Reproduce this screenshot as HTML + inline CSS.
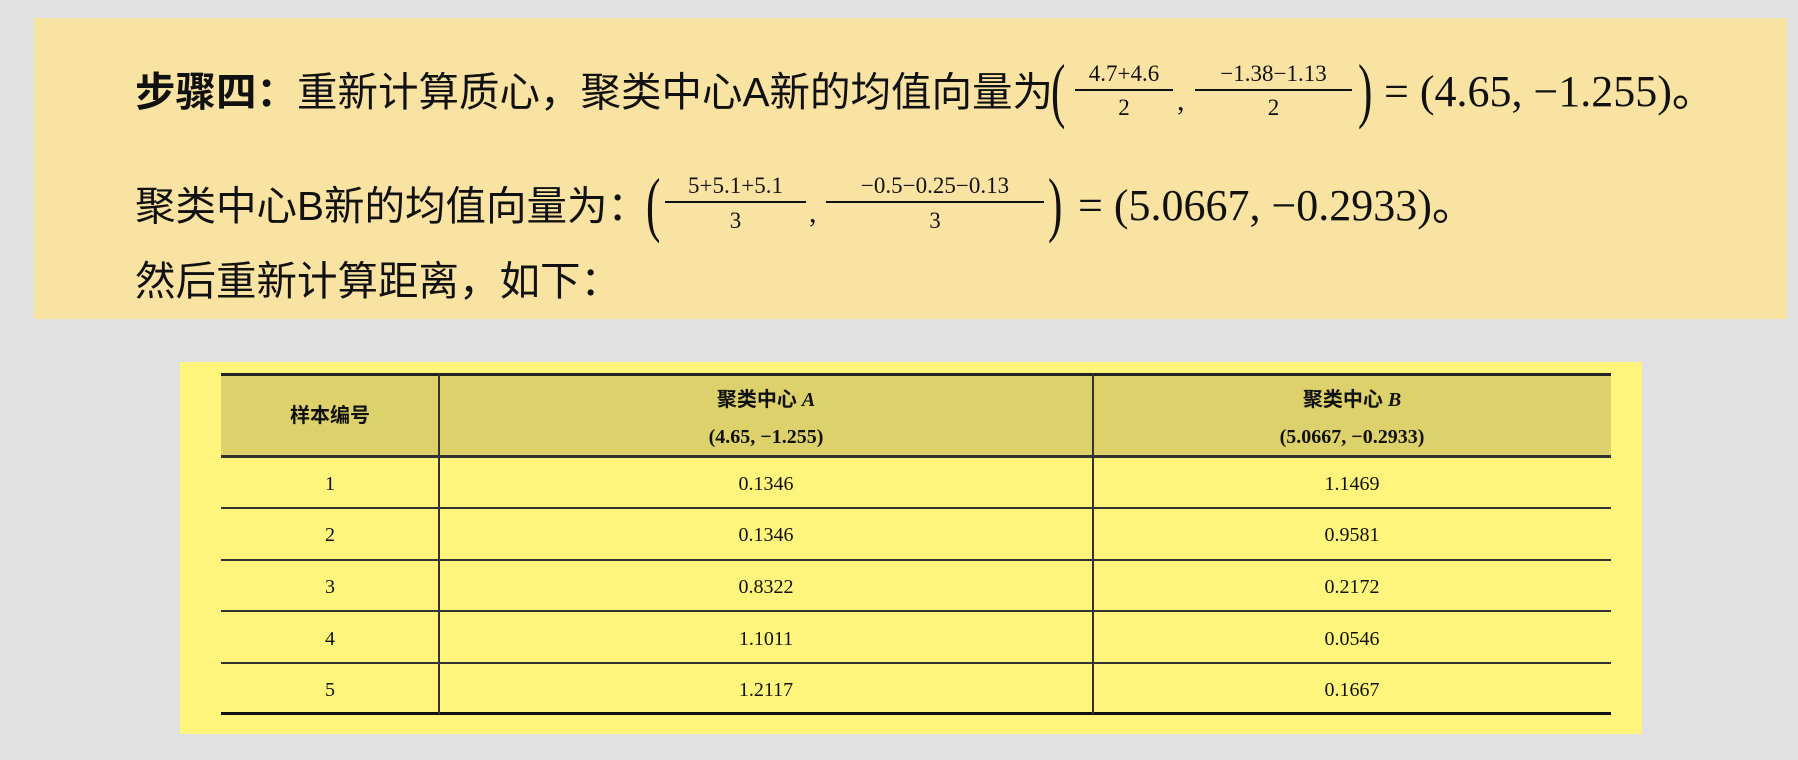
<!DOCTYPE html>
<html><head><meta charset="utf-8"><style>
body{margin:0;width:1798px;height:760px;background:#e1e1e1;position:relative;overflow:hidden;font-family:"Liberation Sans","Noto Sans CJK SC",sans-serif;color:#111}
.a{position:absolute;white-space:nowrap;line-height:1}
.t{font-size:40.5px;transform:translateY(-50%)}
.m{font-family:"Liberation Serif","DejaVu Serif",serif}
.fr{position:absolute;font-family:"Liberation Serif",serif;font-size:23px;text-align:center}
.fr .n{position:absolute;left:0;right:0}
.fr .b{position:absolute;left:0;right:0;height:2px;background:#111}
.p{position:absolute;font-family:"Liberation Serif",serif;font-size:72px;line-height:1;transform:scaleX(.6);transform-origin:left}
.hl{position:absolute;background:#222}
.c{position:absolute;transform:translate(-50%,-50%);font-family:"Liberation Serif","Noto Serif CJK SC",serif;font-size:20px;white-space:nowrap;line-height:1}
.h{font-weight:bold;font-family:"Liberation Serif","Noto Sans CJK SC",serif}
</style></head><body>
<div class="a" style="left:34px;top:18px;width:1753px;height:301px;background:#f9e3a3"></div>

<div class="a t" style="left:135px;top:92px"><b>步骤四：</b>重新计算质心，聚类中心A新的均值向量为</div>
<div class="p" style="left:1051px;top:54px">(</div>
<div class="fr" style="left:1075px;top:60px;width:98px"><div class="n" style="top:1px">4.7+4.6</div><div class="b" style="top:29px"></div><div class="n" style="top:35px">2</div></div>
<div class="a m" style="left:1177px;top:86px;font-size:30px">,</div>
<div class="fr" style="left:1195px;top:60px;width:157px"><div class="n" style="top:1px">−1.38−1.13</div><div class="b" style="top:29px"></div><div class="n" style="top:35px">2</div></div>
<div class="p" style="left:1358px;top:54px">)</div>
<div class="a m" style="left:1384px;top:70px;font-size:44px">= (4.65, −1.255)。</div>

<div class="a t" style="left:135px;top:206px">聚类中心B新的均值向量为：</div>
<div class="p" style="left:646px;top:168px">(</div>
<div class="fr" style="left:665px;top:172px;width:141px"><div class="n" style="top:1px">5+5.1+5.1</div><div class="b" style="top:29px"></div><div class="n" style="top:36px">3</div></div>
<div class="a m" style="left:809px;top:198px;font-size:30px">,</div>
<div class="fr" style="left:826px;top:172px;width:218px"><div class="n" style="top:1px">−0.5−0.25−0.13</div><div class="b" style="top:29px"></div><div class="n" style="top:36px">3</div></div>
<div class="p" style="left:1048px;top:168px">)</div>
<div class="a m" style="left:1078px;top:184px;font-size:44px">= (5.0667, −0.2933)。</div>

<div class="a t" style="left:135px;top:281px">然后重新计算距离，如下：</div>

<div class="a" style="left:180px;top:362px;width:1462px;height:372px;background:#fff47c"></div>
<div class="a" style="left:221px;top:374px;width:1390px;height:82px;background:#dcd16a"></div>
<div class="hl" style="left:221px;top:373px;width:1390px;height:3px"></div>
<div class="hl" style="left:221px;top:455px;width:1390px;height:3px;background:#333"></div>
<div class="hl" style="left:221px;top:507px;width:1390px;height:2px;background:#333"></div>
<div class="hl" style="left:221px;top:559px;width:1390px;height:2px;background:#333"></div>
<div class="hl" style="left:221px;top:610px;width:1390px;height:2px;background:#333"></div>
<div class="hl" style="left:221px;top:662px;width:1390px;height:2px;background:#333"></div>
<div class="hl" style="left:221px;top:712px;width:1390px;height:3px;background:#111"></div>
<div class="hl" style="left:438px;top:374px;width:2px;height:340px;background:#333"></div>
<div class="hl" style="left:1092px;top:374px;width:2px;height:340px;background:#333"></div>

<div class="c h" style="left:330px;top:416px">样本编号</div>
<div class="c h" style="left:766px;top:400px">聚类中心 <i>A</i></div>
<div class="c h" style="left:766px;top:437px">(4.65, −1.255)</div>
<div class="c h" style="left:1352px;top:400px">聚类中心 <i>B</i></div>
<div class="c h" style="left:1352px;top:437px">(5.0667, −0.2933)</div>

<div class="c" style="left:330px;top:484px">1</div><div class="c" style="left:766px;top:484px">0.1346</div><div class="c" style="left:1352px;top:484px">1.1469</div>
<div class="c" style="left:330px;top:535px">2</div><div class="c" style="left:766px;top:535px">0.1346</div><div class="c" style="left:1352px;top:535px">0.9581</div>
<div class="c" style="left:330px;top:587px">3</div><div class="c" style="left:766px;top:587px">0.8322</div><div class="c" style="left:1352px;top:587px">0.2172</div>
<div class="c" style="left:330px;top:639px">4</div><div class="c" style="left:766px;top:639px">1.1011</div><div class="c" style="left:1352px;top:639px">0.0546</div>
<div class="c" style="left:330px;top:690px">5</div><div class="c" style="left:766px;top:690px">1.2117</div><div class="c" style="left:1352px;top:690px">0.1667</div>
</body></html>
